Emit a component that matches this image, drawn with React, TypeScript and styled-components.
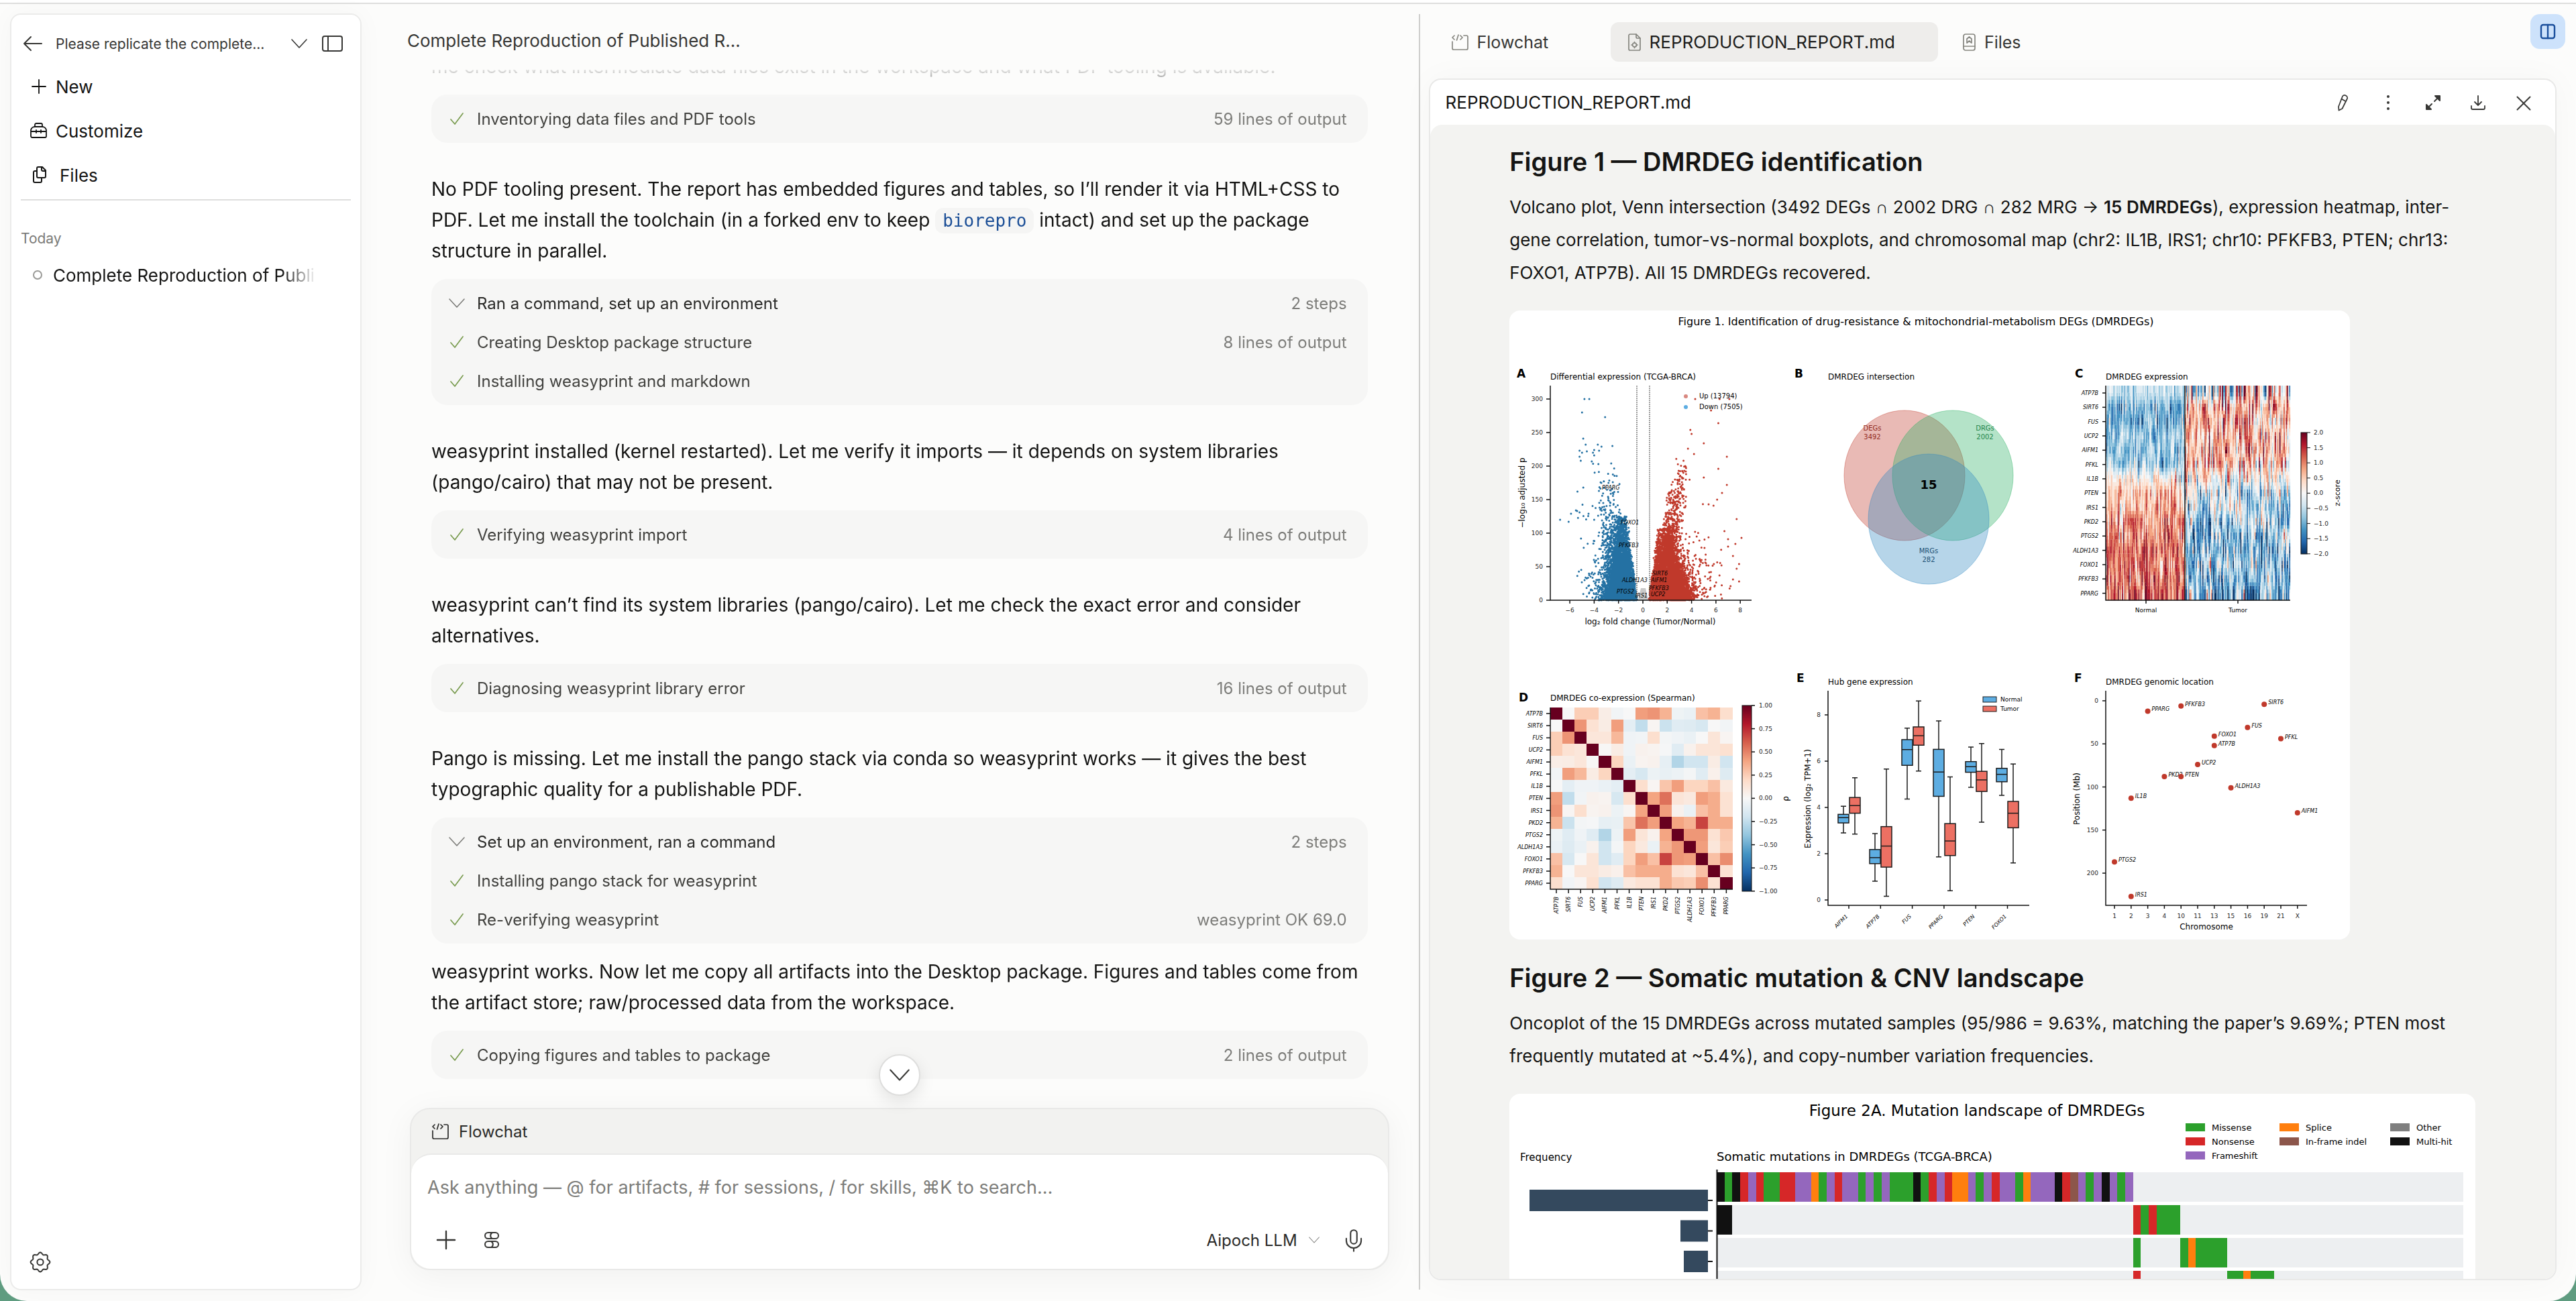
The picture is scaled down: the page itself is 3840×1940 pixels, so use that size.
import { Mic, X } from 'lucide-react';
import React from 'react';
import styled, { createGlobalStyle } from 'styled-components';

const GlobalStyle = createGlobalStyle`
    * {
        box-sizing: border-box;
    }

    body {
        margin: 0;
        background: #5f9c80;
        color: #141413;
        font-family: Inter, 'Liberation Sans', sans-serif;
        font-size: 26px;
    }

    button, select, textarea {
        margin: 0;
        padding: 0;
        border: 0;
        background: none;
        color: inherit;
        font: inherit;
    }

    button {
        cursor: pointer;
    }

    svg {
        display: block;
        flex: none;
    }
`;

/* ---------- window ---------- */

const Window = styled.div`
    display: flex;
    flex-direction: column;
    height: 100vh;
    overflow: hidden;
    border-radius: 0 0 40px 40px;
    background: #fcfcfb;
`;

const TopStrip = styled.div`
    flex: none;
    height: 6px;
    border-bottom: 2px solid #dededd;
    background: #ffffff;
`;

const Columns = styled.div`
    display: flex;
    flex: 1;
    min-height: 0;
`;

/* ---------- sidebar ---------- */

const SidebarPanel = styled.aside`
    display: flex;
    flex-direction: column;
    flex: 0 0 524px;
    min-width: 0;
    margin: 14px 0 16px 15px;
    padding: 20px 14px 22px;
    border: 2px solid #ebebea;
    border-radius: 16px;
    background: #ffffff;
    box-shadow: 0 0 40px rgba(0, 0, 0, 0.03);
`;

const SidebarHeader = styled.div`
    display: flex;
    align-items: center;
    height: 46px;
    margin-bottom: 8px;
    padding-right: 9px;
    color: #373735;
`;

const IconButton = styled.button`
    display: grid;
    place-items: center;
    width: 36px;
    height: 36px;
    color: #373735;
`;

const ProjectButton = styled.button`
    display: flex;
    flex: 1;
    align-items: center;
    justify-content: space-between;
    margin: 0 20px 0 16px;
    font-size: 21px;
`;

const NavLink = styled.a`
    display: flex;
    align-items: center;
    gap: 12px;
    height: 66px;
    padding-left: 14px;
    color: inherit;
    text-decoration: none;
`;

const NavDivider = styled.hr`
    width: 100%;
    height: 2px;
    margin: 3px 0 42px;
    border: 0;
    background: #dededd;
`;

const GroupTitle = styled.h2`
    margin: 0;
    color: #7b7b78;
    font-size: 21px;
    font-weight: 400;
    line-height: 30px;
`;

const SessionLink = styled.a`
    display: flex;
    align-items: center;
    gap: 16px;
    height: 48px;
    margin: 15px 56px 0 0;
    padding-left: 18px;
    color: inherit;
    text-decoration: none;
`;

const SessionDot = styled.span`
    flex: none;
    width: 14px;
    height: 14px;
    border: 2px solid #9a9a97;
    border-radius: 50%;
`;

const SessionName = styled.span`
    overflow: hidden;
    white-space: nowrap;
    mask-image: linear-gradient(to right, #000 88%, rgba(0, 0, 0, 0.1));
`;

const SidebarFooter = styled.div`
    margin-top: auto;
    padding-left: 11px;
`;

/* ---------- chat ---------- */

const ChatColumn = styled.main`
    display: flex;
    flex: 19 1 0;
    flex-direction: column;
    min-width: 0;
    padding: 0 0 46px 28px;
`;

const ChatTitle = styled.h1`
    flex: none;
    height: 98px;
    margin: 0;
    padding: 36px 40px 0;
    color: #373735;
    font-size: 26px;
    font-weight: 400;
    line-height: 38px;
`;

const Thread = styled.div`
    display: flex;
    flex: 1;
    flex-direction: column;
    justify-content: flex-end;
    gap: 19px;
    min-height: 0;
    margin-bottom: 43px;
    padding: 0 76px;
    overflow: hidden;
    mask-image: linear-gradient(to bottom, rgba(0, 0, 0, 0.1), #000 44px);
`;

const Message = styled.p<{ $spaced?: boolean }>`
    flex: none;
    margin: ${props => (props.$spaced ? '27px' : '0')} 0 0;
    font-size: 28px;
    line-height: 46px;
`;

const InlineCode = styled.code`
    padding: 4px 11px;
    border-radius: 12px;
    background: #f5f5f4;
    color: #1c4f97;
    font-family: 'DejaVu Sans Mono', monospace;
    font-size: 26px;
    line-height: 32px;
`;

const StepCard = styled.section`
    flex: none;
    padding: 7px 31px 7px 26px;
    border-radius: 24px;
    background: #f6f6f5;
`;

const StepRow = styled.button<{ $heading?: boolean }>`
    display: flex;
    align-items: center;
    gap: 18px;
    width: 100%;
    height: 58px;
    color: ${props => (props.$heading ? '#2a2a28' : '#42423f')};
    font-size: 24px;
    text-align: left;
`;

const StepMeta = styled.span`
    margin-left: auto;
    color: #7d7d7a;
`;

const Composer = styled.form`
    position: relative;
    flex: none;
    margin: 0 44px;
    border: 2px solid #e9e9e8;
    border-radius: 30px;
    background: #f2f2f0;
    box-shadow: 0 8px 50px rgba(0, 0, 0, 0.05);
`;

const ScrollButton = styled.button`
    position: absolute;
    bottom: calc(100% + 20px);
    left: 50%;
    display: grid;
    place-items: center;
    width: 62px;
    height: 62px;
    margin-left: -31px;
    border: 2px solid #dededd;
    border-radius: 50%;
    background: #ffffff;
    box-shadow: 0 8px 24px rgba(0, 0, 0, 0.1);
    color: #373735;
`;

const ComposerContext = styled.div`
    display: flex;
    align-items: center;
    gap: 14px;
    height: 66px;
    padding-left: 31px;
    color: #2a2a28;
    font-size: 24px;
`;

const ComposerBox = styled.div`
    padding: 31px 34px 23px 24px;
    border-top: 2px solid #e9e9e8;
    border-radius: 30px;
    background: #ffffff;
`;

const ComposerInput = styled.textarea`
    display: block;
    width: 100%;
    height: 36px;
    overflow: hidden;
    outline: 0;
    resize: none;
    font-size: 27px;
    line-height: 36px;

    &::placeholder {
        color: #7d7d7a;
        opacity: 1;
    }
`;

const ComposerTools = styled.div`
    display: flex;
    align-items: center;
    gap: 32px;
    height: 40px;
    margin-top: 40px;
    padding-left: 10px;
`;

const ModelPicker = styled.label`
    display: flex;
    align-items: center;
    gap: 16px;
    margin-left: auto;
    color: #7d7d7a;

    select {
        appearance: none;
        color: #2a2a28;
        font-size: 24px;
    }
`;

/* ---------- document viewer ---------- */

const ViewerColumn = styled.section`
    display: flex;
    flex: 21 1 0;
    flex-direction: column;
    min-width: 0;
    margin: 15px 0 17px;
    padding: 0 0 14px 13px;
    border-left: 2px solid #cfcfcd;
`;

const TabBar = styled.div`
    display: flex;
    align-items: flex-start;
    justify-content: space-between;
    height: 96px;
    padding: 0 16px 0 8px;
`;

const Tabs = styled.nav`
    display: flex;
    gap: 11px;
    margin-top: 12px;
`;

const Tab = styled.button<{ $active?: boolean }>`
    display: flex;
    align-items: center;
    gap: 12px;
    min-width: 252px;
    height: 59px;
    padding: 0 64px 0 26px;
    border-radius: 12px;
    background: ${props => (props.$active ? '#eeedeb' : 'none')};
    color: ${props => (props.$active ? '#1d1d1c' : '#373735')};
    font-size: ${props => (props.$active ? '26px' : '25px')};

    svg {
        color: #85857f;
    }
`;

const SplitButton = styled.button`
    display: grid;
    place-items: center;
    width: 52px;
    height: 52px;
    border-radius: 14px;
    background: #cde2fb;
    color: #1b4f9c;
`;

const Viewer = styled.article`
    display: flex;
    flex: 1;
    flex-direction: column;
    min-height: 0;
    margin-right: 29px;
    overflow: hidden;
    border: 2px solid #e9e9e8;
    border-radius: 18px;
    background: #ffffff;
    box-shadow: 0 0 50px rgba(0, 0, 0, 0.03);
`;

const ViewerHeader = styled.header`
    display: flex;
    flex: none;
    align-items: center;
    justify-content: space-between;
    height: 67px;
    padding: 0 30px 0 23px;
`;

const ViewerActions = styled.div`
    display: flex;
    gap: 31px;
`;

const DocumentBody = styled.div`
    flex: 1;
    min-height: 0;
    overflow: hidden;
    padding: 31px 60px 0;
    border-radius: 18px 18px 0 0;
    background: #f3f3f1;
`;

const DocumentContent = styled.div`
    max-width: 1440px;
    margin: 0 auto;
`;

const SectionTitle = styled.h2`
    margin: 0 0 19px;
    font-size: 38px;
    font-weight: 600;
    line-height: 48px;
`;

const Paragraph = styled.p`
    margin: 0 0 32px;
    font-size: 26px;
    line-height: 49px;

    strong {
        font-weight: 600;
    }
`;

const Figure = styled.figure<{ $width: number }>`
    max-width: ${props => props.$width}px;
    margin: 0 0 33px;
    overflow: hidden;
    border-radius: 16px;
    background: #ffffff;

    svg {
        width: 100%;
        height: auto;
        font-family: 'DejaVu Sans', sans-serif;
    }
`;

/* ---------- icons ---------- */

const iconProps = {
    fill: 'none',
    stroke: 'currentColor',
    strokeLinecap: 'round' as const,
    strokeLinejoin: 'round' as const,
    'aria-hidden': true,
};

const ChevronIcon: React.FC<{ width?: number; color?: string }> = ({ width = 24, color }) => (
    <svg width={width} height={width} viewBox="0 0 24 24" strokeWidth="1.6" {...iconProps} color={color}>
        <path d="m1 6 11 12L23 6" />
    </svg>
);

const CheckIcon = () => (
    <svg width="24" height="24" viewBox="0 0 24 24" strokeWidth="1.7" {...iconProps} color="#7a9c50">
        <path d="m3 13 6 7L21 4" />
    </svg>
);

const BackIcon = () => (
    <svg width="36" height="26" viewBox="0 0 36 26" strokeWidth="2" {...iconProps}>
        <path d="M31 13H5M15 3 5 13l10 10" />
    </svg>
);

const PlusIcon: React.FC<{ size?: number }> = ({ size = 26 }) => (
    <svg width={size} height={size} viewBox="0 0 26 26" strokeWidth="1.8" {...iconProps}>
        <path d="M13 3v20M3 13h20" />
    </svg>
);

const PanelIcon = () => (
    <svg width="32" height="26" viewBox="0 0 32 26" strokeWidth="2" {...iconProps}>
        <rect x="1" y="2" width="29" height="22" rx="3" />
        <path d="M9 2v22" />
    </svg>
);

const ToolboxIcon = () => (
    <svg width="26" height="26" viewBox="0 0 26 26" strokeWidth="1.8" {...iconProps}>
        <path d="M7 7V4a2 2 0 0 1 2-2h7a2 2 0 0 1 2 2v3" />
        <path d="M1 14v-2a6 6 0 0 1 6-5h11a6 6 0 0 1 6 5v9a2 2 0 0 1-2 2H3a2 2 0 0 1-2-2zh23M9 12v4M16 12v4" />
    </svg>
);

const FilesIcon = () => (
    <svg width="32" height="26" viewBox="0 0 32 26" strokeWidth="2" {...iconProps}>
        <path d="M12 1h6l5 5v9a2 2 0 0 1-2 2h-9a2 2 0 0 1-2-2V3a2 2 0 0 1 2-2z" />
        <path d="M17 1v4a2 2 0 0 0 2 2h4M10 7H7a2 2 0 0 0-2 2v13a2 2 0 0 0 2 2h8a2 2 0 0 0 2-2v-4" />
    </svg>
);

const gearOutline = Array.from({ length: 97 }, (_, i) => {
    const angle = (i / 96) * Math.PI * 2;
    const radius = 13 + 1.4 * Math.cos(angle * 8);
    return `${(16 + radius * Math.sin(angle)).toFixed(1)} ${(16 - radius * Math.cos(angle)).toFixed(1)}`;
}).join('L');

const GearIcon = () => (
    <svg width="32" height="32" viewBox="0 0 32 32" strokeWidth="2" {...iconProps}>
        <path d={`M${gearOutline}Z`} />
        <circle cx="16" cy="16" r="4.6" />
    </svg>
);

const FlowIcon = () => (
    <svg width="26" height="26" viewBox="0 0 26 26" strokeWidth="1.7" {...iconProps}>
        <path d="M1 12v10a2 2 0 0 0 2 2h19a2 2 0 0 0 2-2V5a2 2 0 0 0-2-2h-4" />
        <path d="M4 3 1 6l3 3M10 2 7.500 10M13 3l3 3-3 3" />
    </svg>
);

const ReportIcon = () => (
    <svg width="20" height="26" viewBox="0 0 20 26" strokeWidth="1.700" {...iconProps}>
        <path d="M3 1h9l6 6v16a2 2 0 0 1-2 2H3a2 2 0 0 1-2-2V3a2 2 0 0 1 2-2z" />
        <path d="M12 1v4a2 2 0 0 0 2 2h4" />
        <circle cx="9.500" cy="17" r="3" />
        <path d="M9.500 12.500V14M9.500 20v1.500M5 17h1.500M12.500 17H14" />
    </svg>
);

const BookIcon = () => (
    <svg width="20" height="26" viewBox="0 0 20 26" strokeWidth="1.700" {...iconProps}>
        <rect x="1" y="1" width="17" height="24" rx="3" />
        <path d="M1 19h17M6 14V8l3.500-3L13 8v6l-3.500-3z" />
    </svg>
);

const SplitIcon = () => (
    <svg width="24" height="24" viewBox="0 0 24 24" strokeWidth="2.400" {...iconProps}>
        <rect x="2" y="2" width="20" height="20" rx="3" />
        <path d="M12 2v20" />
    </svg>
);

const PencilIcon = () => (
    <svg width="24" height="26" viewBox="0 0 24 26" strokeWidth="1.700" {...iconProps}>
        <path d="M11 3.500a4 4 0 0 1 7 3.500L10.500 22 5.500 24.500 5 19z" />
        <path d="m9.500 7.500 6 3.500" />
    </svg>
);

const DotsIcon = () => (
    <svg width="24" height="24" viewBox="0 0 24 24" fill="currentColor" aria-hidden>
        <circle cx="12" cy="3" r="2" />
        <circle cx="12" cy="12" r="2" />
        <circle cx="12" cy="21" r="2" />
    </svg>
);

const ExpandIcon = () => (
    <svg width="26" height="26" viewBox="0 0 26 26" strokeWidth="2" {...iconProps}>
        <path d="m15 11 7-7M4 22l7-7" />
        <path d="M16 3h7v7zM3 16v7h7z" fill="currentColor" />
    </svg>
);

const SaveIcon = () => (
    <svg width="24" height="24" viewBox="0 0 24 24" strokeWidth="1.800" {...iconProps}>
        <path d="M12 2v14M7 11l5 5 5-5M2 17v3a2 2 0 0 0 2 2h16a2 2 0 0 0 2-2v-3" />
    </svg>
);

const SkillsIcon = () => (
    <svg width="24" height="26" viewBox="0 0 24 26" strokeWidth="2" {...iconProps}>
        <rect x="2" y="2" width="20" height="9" rx="4.500" />
        <rect x="2" y="15" width="20" height="9" rx="4.500" />
        <path d="M13 2a5 5 0 0 0 0 9M11 15a5 5 0 0 1 0 9" />
    </svg>
);

/* ---------- figure helpers ---------- */

const genes = [
    'ATP7B', 'SIRT6', 'FUS', 'UCP2', 'AIFM1', 'PFKL', 'IL1B', 'PTEN',
    'IRS1', 'PKD2', 'PTGS2', 'ALDH1A3', 'FOXO1', 'PFKFB3', 'PPARG',
];

const rdBu = [
    [5, 48, 97], [33, 102, 172], [67, 147, 195], [146, 197, 222], [209, 229, 240], [247, 247, 247],
    [253, 219, 199], [244, 165, 130], [214, 96, 77], [178, 24, 43], [103, 0, 31],
];

// diverging colour for a value between -1 and 1
const diverging = (value: number) => {
    const t = (Math.max(-1, Math.min(1, value)) + 1) * 5;
    const i = Math.min(9, Math.floor(t));
    const mix = rdBu[i].map((c, k) => Math.round(c + (rdBu[i + 1][k] - c) * (t - i)));
    return `rgb(${mix.join(',')})`;
};

const createRandom = (seed: number) => () => {
    seed = (seed * 1664525 + 1013904223) % 4294967296;
    return seed / 4294967296;
};

const createNormal = (random: () => number) => () =>
    Math.sqrt(-2 * Math.log(random() + 1e-9)) * Math.cos(2 * Math.PI * random());

const createExponential = (random: () => number) => (mean: number) => -Math.log(random() + 1e-6) * mean;

type Point = [number, number];

const toDots = (points: Point[]) => points.map(([x, y]) => `M${x.toFixed(1)} ${y.toFixed(1)}h0`).join('');

const Gradient: React.FC<{ id: string }> = ({ id }) => (
    <linearGradient id={id} x1="0" y1="1" x2="0" y2="0">
        {rdBu.map((c, i) => (
            <stop key={i} offset={i / 10} stopColor={`rgb(${c.join(',')})`} />
        ))}
    </linearGradient>
);

const PanelTitle: React.FC<{ letter: string; letterX: number; letterY: number; x: number; y: number; title: string }> = ({
    letter, letterX, letterY, x, y, title,
}) => (
    <>
        <text x={letterX} y={letterY} fontSize="17" fontWeight="700">{letter}</text>
        <text x={x} y={y} fontSize="12">{title}</text>
    </>
);

/* ---------- figure 1 ---------- */

const foldX = (v: number) => 199 + 18.15 * v;
const pvalueY = (v: number) => 432 - v;

const makeCloud = (side: -1 | 1, seed: number) => {
    const random = createRandom(seed);
    const exponential = createExponential(random);
    const up = side === 1;
    const points: Point[] = [];
    const push = (fold: number, p: number, limit: number) => {
        if (p > 0 && p < limit && fold < (up ? 7.9 : 5.4)) points.push([foldX(side * fold), pvalueY(p)]);
    };
    for (let i = 0; i < 5200; i++) {
        const p = exponential(up ? 29 : 36);
        const width = (up ? 3 : 2.3) * Math.max(0.25, 1 - p / 150);
        push(0.45 + p * 0.0065 + random() * width + exponential(up ? 0.3 : 0.25), p, up ? 108 : 125);
    }
    // column of strongly changed genes above the base
    for (let i = 0; i < (up ? 480 : 260); i++) {
        const p = 60 + random() * (up ? Math.sqrt(random()) : random()) * 155;
        const centre = up ? 1.2 + p * 0.0105 : 1.6 + p * 0.009;
        push(centre + (random() + random() - 1) * (up ? 0.9 : 1.3), p, up ? 215 : 205);
    }
    for (let i = 0; i < (up ? 720 : 480); i++) {
        push(1.9 + exponential(up ? 1.1 : 1), exponential(up ? 38 : 60), up ? 165 : 205);
    }
    return points;
};

const place = ([fold, p]: number[]): Point => [foldX(fold), pvalueY(p)];

const downPoints = makeCloud(-1, 7).concat(
    [
        [-4.8, 300], [-4.4, 300], [-5, 280], [-3.1, 273], [-4.9, 241], [-4.7, 232], [-3.7, 232], [-2.5, 230], [-3.4, 229],
        [-5.2, 223], [-4.6, 222], [-4, 224], [-3.6, 223], [-4.1, 220], [-5, 220], [-4, 216], [-5.2, 214], [-5.1, 208],
        [-4.2, 207], [-2.6, 204], [-6.8, 120], [-6.1, 117], [-5.9, 129], [-5.5, 134], [-5.4, 133], [-5.2, 131],
    ].map(place),
);

const upPoints = makeCloud(1, 23).concat(
    [
        [4.3, 300], [6.3, 300], [7.1, 300], [5.6, 283], [6.2, 264], [3.9, 254], [4, 248], [5, 234], [3.7, 226], [4.2, 218],
        [6.9, 214], [6.2, 196], [5, 183], [6.9, 172], [6.5, 160], [6.1, 150], [5.4, 143], [5.8, 141], [7.7, 121], [6.7, 103],
        [8.1, 93], [7, 91], [7.6, 84], [7, 80], [7.4, 66], [7.9, 54], [7.7, 47], [7.4, 31], [7.9, 28], [7.2, 21],
    ].map(place),
);

const volcanoLabels: [number, number, string][] = [
    [138, 267, 'PPARG'], [166, 319, 'FOXO1'], [163, 353, 'PFKFB3'], [168, 405, 'ALDH1A3'],
    [213, 395, 'SIRT6'], [211, 405, 'AIFM1'], [160, 422, 'PTGS2'], [188, 428, 'IRS1'], [208, 417, 'PFKFB3'], [211, 426, 'UCP2'],
];

const axisText = { fontSize: 9, fill: '#262626' };

const Volcano = () => (
    <g>
        <PanelTitle letter="A" letterX={11} letterY={100} x={61} y={103} title="Differential expression (TCGA-BRCA)" />
        <path d="M192 432l4-18h7l4 18z" fill="#c9c9c9" />
        <path d={toDots(downPoints)} stroke="#2471a3" strokeWidth="3" strokeLinecap="round" />
        <path d={toDots(upPoints)} stroke="#c0392b" strokeWidth="3" strokeLinecap="round" />
        <path d="M190 112V432M209 112V432" stroke="#444" strokeDasharray="2 1" />
        <path d="M61 112V432H361" fill="none" stroke="#111" strokeWidth="1.500" />
        {[-6, -4, -2, 0, 2, 4, 6, 8].map(v => (
            <g key={v}>
                <path d={`M${foldX(v)} 432v5`} stroke="#111" strokeWidth="1.500" />
                <text x={foldX(v)} y="450" textAnchor="middle" {...axisText}>{String(v).replace('-', '−')}</text>
            </g>
        ))}
        {[0, 50, 100, 150, 200, 250, 300].map(v => (
            <g key={v}>
                <path d={`M61 ${pvalueY(v)}h-6`} stroke="#111" strokeWidth="1.500" />
                <text x="50" y={pvalueY(v) + 3} textAnchor="end" {...axisText}>{v}</text>
            </g>
        ))}
        {volcanoLabels.map(([x, y, label], i) => (
            <text key={i} x={x} y={y} fontSize="8" fontStyle="italic">{label}</text>
        ))}
        <circle cx="263" cy="128" r="3" fill="#d98880" />
        <circle cx="263" cy="144" r="3" fill="#5dade2" />
        <text x="283" y="131" fontSize="10">Up (13794)</text>
        <text x="283" y="147" fontSize="10">Down (7505)</text>
        <text x="210" y="468" fontSize="12" textAnchor="middle">log₂ fold change (Tumor/Normal)</text>
        <text transform="translate(23 272) rotate(-90)" fontSize="12" textAnchor="middle">−log₁₀ adjusted p</text>
    </g>
);

const Venn = () => (
    <g textAnchor="middle" fontSize="10">
        <g textAnchor="start">
            <PanelTitle letter="B" letterX={425} letterY={100} x={475} y={103} title="DMRDEG intersection" />
        </g>
        <g fillOpacity="0.35" strokeOpacity="0.4">
            <ellipse cx="589" cy="246" rx="90" ry="97" fill="#c0392b" stroke="#c0392b" />
            <ellipse cx="661" cy="246" rx="90" ry="97" fill="#27ae60" stroke="#27ae60" />
            <ellipse cx="625" cy="311" rx="90" ry="97" fill="#2e86c1" stroke="#2e86c1" />
        </g>
        <text x="541" y="179" fill="#922b21">DEGs</text>
        <text x="541" y="192" fill="#922b21">3492</text>
        <text x="709" y="179" fill="#1e8449">DRGs</text>
        <text x="709" y="192" fill="#1e8449">2002</text>
        <text x="625" y="362" fill="#1b4f72">MRGs</text>
        <text x="625" y="375" fill="#1b4f72">282</text>
        <text x="625" y="266" fontSize="18" fontWeight="700">15</text>
    </g>
);

const normalMeans = [-0.45, -1, -0.9, -0.7, -0.75, -0.8, 0.1, 0.7, 0.65, 0.9, 0.85, 0.95, 1, 1, 1.15];
const tumorMeans = [0.3, 0.6, 0.6, 0.5, 0.65, 0.5, 0, -0.45, -0.5, -0.65, -0.75, -0.75, -0.7, -0.65, -0.8];

// cells of equal colour are collected in one path
const expressionPaths = (() => {
    const normal = createNormal(createRandom(41));
    const columns = 170;
    const width = 275 / columns;
    const scores = normalMeans.map((mean, row) =>
        Array.from({ length: columns }, (_, c) => {
            if (c < 73) return mean + normal() * (row === 0 ? 0.3 : 0.55);
            return tumorMeans[row] + normal() * (row === 0 ? 1.2 : 0.8);
        }),
    );
    const buckets = new Map<number, string>();
    // each row is drawn as four strips blended with its neighbours
    for (let strip = 0; strip < 60; strip++) {
        const at = Math.max(0, Math.min(14, (strip + 0.5) / 4 - 0.5));
        const row = Math.min(13, Math.floor(at));
        for (let c = 0; c < columns; c++) {
            const z = scores[row][c] + (scores[row + 1][c] - scores[row][c]) * (at - row);
            const key = Math.max(-10, Math.min(10, Math.round(z * 5)));
            const x = (889 + c * width).toFixed(2);
            const y = (112 + (strip * 320) / 60).toFixed(2);
            buckets.set(key, `${buckets.get(key) ?? ''}M${x} ${y}h1.7v5.5h-1.7z`);
        }
    }
    return [...buckets];
})();

const Expression = () => (
    <g>
        <PanelTitle letter="C" letterX={843} letterY={100} x={889} y={103} title="DMRDEG expression" />
        {expressionPaths.map(([key, d]) => (
            <path key={key} d={d} fill={diverging(key / 10)} />
        ))}
        <path d="M1007 112V432" stroke="#111" strokeWidth="1.500" />
        <path d="M889 112V432H1164M949 432v5M1086 432v5" fill="none" stroke="#111" strokeWidth="1.500" />
        {genes.map((gene, i) => (
            <g key={gene}>
                <path d={`M889 ${123 + i * 21.33}h-5`} stroke="#111" strokeWidth="1.500" />
                <text x="878" y={126 + i * 21.33} fontSize="8" fontStyle="italic" textAnchor="end">{gene}</text>
            </g>
        ))}
        <text x="949" y="450" fontSize="9" textAnchor="middle">Normal</text>
        <text x="1086" y="450" fontSize="9" textAnchor="middle">Tumor</text>
        <rect x="1180" y="182" width="9" height="181" fill="url(#zscore)" stroke="#111" />
        {['2.0', '1.5', '1.0', '0.5', '0.0', '−0.5', '−1.0', '−1.5', '−2.0'].map((label, i) => (
            <g key={label}>
                <path d={`M1189 ${182 + i * 22.6}h5`} stroke="#111" />
                <text x="1199" y={185 + i * 22.6} {...axisText}>{label}</text>
            </g>
        ))}
        <text transform="translate(1238 272) rotate(-90)" fontSize="11" textAnchor="middle">z-score</text>
    </g>
);

// upper triangle of the Spearman matrix, row by row
const correlations = [
    [1, 0, 0.25, 0.25, 0.07, -0.03, 0, 0.42, 0.45, 0.35, -0.05, -0.07, 0.3, 0.35, 0.17],
    [1, 0.45, 0.15, 0.08, 0.42, -0.1, -0.25, 0.02, -0.22, -0.12, -0.13, -0.17, 0, -0.03],
    [1, 0.12, 0.12, 0.33, -0.04, -0.03, 0.17, -0.02, -0.04, -0.07, 0, 0.13, 0.02],
    [1, 0.01, 0.08, -0.04, 0.04, 0.03, -0.01, -0.12, 0.04, 0.13, 0.13, 0.16],
    [1, 0.22, -0.07, 0.03, 0.04, -0.09, -0.3, -0.2, -0.2, 0.08, -0.2],
    [1, -0.1, -0.17, -0.06, -0.08, -0.06, -0.02, -0.12, 0.05, -0.13],
    [1, 0.17, 0.02, 0.28, 0.42, 0.22, 0.22, 0.3, 0.1],
    [1, 0.4, 0.55, 0.13, 0.1, 0.42, 0.37, 0.15],
    [1, 0.42, 0.04, -0.07, 0.3, 0.37, 0.15],
    [1, 0.4, 0.35, 0.68, 0.37, 0.37],
    [1, 0.44, 0.44, 0.15, 0.27],
    [1, 0.42, 0.12, 0.25],
    [1, 0.3, 0.47],
    [1, 0.15],
    [1],
];

const Coexpression = () => (
    <g>
        <PanelTitle letter="D" letterX={14} letterY={583} x={61} y={582} title="DMRDEG co-expression (Spearman)" />
        <g shapeRendering="crispEdges">
            {genes.map((gene, row) =>
                genes.map((other, column) => (
                    <rect
                        key={gene + other}
                        x={61 + column * 18.1}
                        y={592 + row * 18.07}
                        width="18.2"
                        height="18.2"
                        fill={diverging(correlations[Math.min(row, column)][Math.abs(row - column)])}
                    />
                )),
            )}
        </g>
        <path d="M61 592V863H333" fill="none" stroke="#111" strokeWidth="1.500" />
        {genes.map((gene, i) => (
            <g key={gene} fontSize="8" fontStyle="italic" textAnchor="end">
                <path d={`M61 ${601 + i * 18.07}h-6M${70 + i * 18.1} 863v6`} stroke="#111" strokeWidth="1.500" />
                <text x="50" y={604 + i * 18.07}>{gene}</text>
                <text transform={`translate(${73 + i * 18.1} 874) rotate(-90)`}>{gene}</text>
            </g>
        ))}
        <rect x="347" y="589" width="14" height="277" fill="url(#zscore)" stroke="#111" />
        {['1.00', '0.75', '0.50', '0.25', '0.00', '−0.25', '−0.50', '−0.75', '−1.00'].map((label, i) => (
            <g key={label}>
                <path d={`M361 ${589 + i * 34.6}h5`} stroke="#111" strokeWidth="1.500" />
                <text x="372" y={592 + i * 34.6} {...axisText}>{label}</text>
            </g>
        ))}
        <text transform="translate(416 728) rotate(-90)" fontSize="12" textAnchor="middle">ρ</text>
    </g>
);

const exprY = (v: number) => 879 - 34.5 * v;

// x, then low whisker, quartiles and high whisker in log2 TPM
const boxes: [number, number, number, number, number, number][] = [
    [498, 2.9, 3.33, 3.56, 3.7, 4.05], [515, 2.85, 3.75, 4.08, 4.43, 5.28],
    [545, 0.81, 1.57, 1.83, 2.18, 2.87], [562, 0.16, 1.42, 2.33, 3.17, 5.66],
    [593, 4.36, 5.82, 6.5, 6.93, 7.43], [610, 5.57, 6.69, 7.1, 7.48, 8.6],
    [640, 1.86, 4.48, 5.53, 6.51, 7.74], [657, 0.4, 1.92, 2.55, 3.3, 5.32],
    [688, 4.87, 5.52, 5.76, 5.98, 6.61], [704, 3.36, 4.69, 5.19, 5.56, 6.76],
    [734, 4.52, 5.11, 5.43, 5.69, 6.51], [751, 1.6, 3.12, 3.75, 4.26, 5.88],
];

const HubGenes = () => (
    <g>
        <PanelTitle letter="E" letterX={428} letterY={554} x={475} y={558} title="Hub gene expression" />
        <path d="M475 567V887H775" fill="none" stroke="#111" strokeWidth="1.500" />
        {[0, 2, 4, 6, 8].map(v => (
            <g key={v}>
                <path d={`M475 ${exprY(v)}h-5`} stroke="#111" strokeWidth="1.500" />
                <text x="464" y={exprY(v) + 3} textAnchor="end" {...axisText}>{v}</text>
            </g>
        ))}
        {['AIFM1', 'ATP7B', 'FUS', 'PPARG', 'PTEN', 'FOXO1'].map((gene, i) => (
            <g key={gene}>
                <path d={`M${506 + i * 47.3} 887v5`} stroke="#111" strokeWidth="1.500" />
                <text
                    transform={`translate(${505 + i * 47.3} 904) rotate(-45)`}
                    fontSize="8"
                    fontStyle="italic"
                    textAnchor="end"
                >
                    {gene}
                </text>
            </g>
        ))}
        {boxes.map(([x, low, q1, median, q3, high], i) => (
            <g key={x} stroke="#1c1c1c" strokeWidth="1.500">
                <path d={`M${x} ${exprY(low)}V${exprY(high)}M${x - 4} ${exprY(low)}h8M${x - 4} ${exprY(high)}h8`} />
                <rect
                    x={x - 8}
                    y={exprY(q3)}
                    width="16"
                    height={exprY(q1) - exprY(q3)}
                    fill={i % 2 ? '#ec7063' : '#5dade2'}
                />
                <path d={`M${x - 8} ${exprY(median)}h16`} />
            </g>
        ))}
        <rect x="706" y="576" width="20" height="8" fill="#5dade2" stroke="#1c1c1c" />
        <rect x="706" y="590" width="20" height="8" fill="#ec7063" stroke="#1c1c1c" />
        <text x="732" y="583" fontSize="9">Normal</text>
        <text x="732" y="597" fontSize="9">Tumor</text>
        <text transform="translate(449 728) rotate(-90)" fontSize="12" textAnchor="middle">Expression (log₂ TPM+1)</text>
    </g>
);

const chromosomes = ['1', '2', '3', '4', '10', '11', '13', '15', '16', '19', '21', 'X'];
const chromX = (i: number) => 902 + i * 24.8;
const megabaseY = (v: number) => 582 + v * 1.285;

const loci: [string, number, number][] = [
    ['PPARG', 2, 12], ['PFKFB3', 4, 6], ['SIRT6', 9, 4], ['FUS', 8, 31], ['FOXO1', 6, 41],
    ['ATP7B', 6, 52], ['PFKL', 10, 44], ['UCP2', 5, 74], ['PKD2', 3, 88], ['PTEN', 4, 88],
    ['ALDH1A3', 7, 101], ['IL1B', 1, 113], ['AIFM1', 11, 130], ['PTGS2', 0, 187], ['IRS1', 1, 227],
];

const Locations = () => (
    <g>
        <PanelTitle letter="F" letterX={842} letterY={554} x={889} y={558} title="DMRDEG genomic location" />
        <path d="M889 567V887H1189" fill="none" stroke="#111" strokeWidth="1.500" />
        {[0, 50, 100, 150, 200].map(v => (
            <g key={v}>
                <path d={`M889 ${megabaseY(v)}h-5`} stroke="#111" strokeWidth="1.500" />
                <text x="878" y={megabaseY(v) + 3} textAnchor="end" {...axisText}>{v}</text>
            </g>
        ))}
        {chromosomes.map((name, i) => (
            <g key={name}>
                <path d={`M${chromX(i)} 887v5`} stroke="#111" strokeWidth="1.500" />
                <text x={chromX(i)} y="906" textAnchor="middle" {...axisText}>{name}</text>
            </g>
        ))}
        {loci.map(([gene, chromosome, position]) => (
            <g key={gene}>
                <circle cx={chromX(chromosome)} cy={megabaseY(position)} r="4" fill="#c0392b" />
                <text x={chromX(chromosome) + 6} y={megabaseY(position)} fontSize="8" fontStyle="italic">{gene}</text>
            </g>
        ))}
        <text x="1039" y="923" fontSize="12" textAnchor="middle">Chromosome</text>
        <text transform="translate(850 728) rotate(-90)" fontSize="12" textAnchor="middle">Position (Mb)</text>
    </g>
);

const IdentificationFigure = () => (
    <svg viewBox="0 0 1253 938" role="img" aria-label="Identification of DMRDEGs">
        <defs>
            <Gradient id="zscore" />
        </defs>
        <text x="606" y="22" fontSize="16" textAnchor="middle">
            Figure 1. Identification of drug-resistance &amp; mitochondrial-metabolism DEGs (DMRDEGs)
        </text>
        <Volcano />
        <Venn />
        <Expression />
        <Coexpression />
        <HubGenes />
        <Locations />
    </svg>
);

/* ---------- figure 2 ---------- */

const mutationColors: Record<string, string> = {
    G: '#2ca02c',
    R: '#d62728',
    P: '#9467bd',
    O: '#ff7f0e',
    B: '#8c564b',
    K: '#111111',
};

// one letter per sample, dot for a sample without a mutation
const mutationRows = [
    'KGKRPRGGRRPPOGPRPPGPGPGGGKGRPROOPGPRPPGOPPPKRBPGPKPGP',
    `KK${'.'.repeat(51)}RGRGGG`,
    `${'.'.repeat(53)}G${'.'.repeat(5)}GOGGGG`,
    `${'.'.repeat(53)}R${'.'.repeat(11)}GGOGGG`,
];

const mutationLegend: [string, string, number, number][] = [
    ['Missense', '#2ca02c', 1008, 44],
    ['Nonsense', '#d62728', 1008, 65],
    ['Frameshift', '#9467bd', 1008, 86],
    ['Splice', '#ff7f0e', 1148, 44],
    ['In-frame indel', '#8c564b', 1148, 65],
    ['Other', '#7f7f7f', 1313, 44],
    ['Multi-hit', '#111111', 1313, 65],
];

const frequencies = [266, 41, 36];
const cellWidth = 11.71;

const MutationFigure = () => (
    <svg viewBox="0 0 1440 620" role="img" aria-label="Mutation landscape of DMRDEGs">
        <text x="697" y="33" fontSize="23" textAnchor="middle">Figure 2A. Mutation landscape of DMRDEGs</text>
        {mutationLegend.map(([label, color, x, y]) => (
            <g key={label}>
                <rect x={x} y={y} width="29" height="12" fill={color} />
                <text x={x + 39} y={y + 11} fontSize="13">{label}</text>
            </g>
        ))}
        <text x="16" y="100" fontSize="15">Frequency</text>
        <text x="309" y="100" fontSize="18">Somatic mutations in DMRDEGs (TCGA-BRCA)</text>
        <g shapeRendering="crispEdges">
            {mutationRows.map((cells, row) => (
                <g key={row}>
                    <rect x="309" y={117 + row * 49} width="1113" height="44" fill="#edeff1" />
                    {[...cells].map((cell, i) =>
                        cell === '.' ? null : (
                            <rect
                                key={i}
                                x={309 + i * cellWidth}
                                y={117 + row * 49}
                                width={cellWidth}
                                height="44"
                                fill={mutationColors[cell]}
                            />
                        ),
                    )}
                </g>
            ))}
        </g>
        {frequencies.map((width, row) => (
            <g key={width}>
                <rect x={296 - width} y={143 + row * 45.5} width={width} height="32" fill="#34495e" />
                <path d={`M296 ${159 + row * 45.5}h7`} stroke="#111" strokeWidth="2" />
            </g>
        ))}
        <path d="M309.500 113V620" stroke="#111" strokeWidth="2" />
    </svg>
);

/* ---------- page parts ---------- */

const Sidebar = () => (
    <SidebarPanel>
        <SidebarHeader>
            <IconButton type="button" aria-label="Back"><BackIcon /></IconButton>
            <ProjectButton type="button">
                Please replicate the complete...
                <ChevronIcon />
            </ProjectButton>
            <IconButton type="button" aria-label="Toggle sidebar"><PanelIcon /></IconButton>
        </SidebarHeader>
        <nav>
            <NavLink href="#new"><PlusIcon />New</NavLink>
            <NavLink href="#customize"><ToolboxIcon />Customize</NavLink>
            <NavLink href="#files"><FilesIcon />Files</NavLink>
        </nav>
        <NavDivider />
        <GroupTitle>Today</GroupTitle>
        <SessionLink href="#session">
            <SessionDot />
            <SessionName>Complete Reproduction of Published Results</SessionName>
        </SessionLink>
        <SidebarFooter>
            <IconButton type="button" aria-label="Settings"><GearIcon /></IconButton>
        </SidebarFooter>
    </SidebarPanel>
);

interface Step {
    label: string;
    meta?: string;
    heading?: boolean;
}

const Steps: React.FC<{ steps: Step[] }> = ({ steps }) => (
    <StepCard>
        {steps.map(({ label, meta, heading }) => (
            <StepRow key={label} type="button" $heading={heading}>
                {heading ? <ChevronIcon color="#7d7d7a" /> : <CheckIcon />}
                {label}
                {meta && <StepMeta>{meta}</StepMeta>}
            </StepRow>
        ))}
    </StepCard>
);

const Chat = () => (
    <ChatColumn>
        <ChatTitle>Complete Reproduction of Published R…</ChatTitle>
        <Thread>
            <Message>me check what intermediate data files exist in the workspace and what PDF tooling is available.</Message>
            <Steps steps={[{ label: 'Inventorying data files and PDF tools', meta: '59 lines of output' }]} />

            <Message $spaced>
                No PDF tooling present. The report has embedded figures and tables, so I’ll render it via HTML+CSS to
                PDF. Let me install the toolchain (in a forked env to keep <InlineCode>biorepro</InlineCode> intact) and
                set up the package structure in parallel.
            </Message>
            <Steps
                steps={[
                    { label: 'Ran a command, set up an environment', meta: '2 steps', heading: true },
                    { label: 'Creating Desktop package structure', meta: '8 lines of output' },
                    { label: 'Installing weasyprint and markdown' },
                ]}
            />

            <Message $spaced>
                weasyprint installed (kernel restarted). Let me verify it imports — it depends on system libraries
                (pango/cairo) that may not be present.
            </Message>
            <Steps steps={[{ label: 'Verifying weasyprint import', meta: '4 lines of output' }]} />

            <Message $spaced>
                weasyprint can’t find its system libraries (pango/cairo). Let me check the exact error and consider
                alternatives.
            </Message>
            <Steps steps={[{ label: 'Diagnosing weasyprint library error', meta: '16 lines of output' }]} />

            <Message $spaced>
                Pango is missing. Let me install the pango stack via conda so weasyprint works — it gives the best
                typographic quality for a publishable PDF.
            </Message>
            <Steps
                steps={[
                    { label: 'Set up an environment, ran a command', meta: '2 steps', heading: true },
                    { label: 'Installing pango stack for weasyprint' },
                    { label: 'Re-verifying weasyprint', meta: 'weasyprint OK 69.0' },
                ]}
            />

            <Message>
                weasyprint works. Now let me copy all artifacts into the Desktop package. Figures and tables come from
                the artifact store; raw/processed data from the workspace.
            </Message>
            <Steps steps={[{ label: 'Copying figures and tables to package', meta: '2 lines of output' }]} />
        </Thread>

        <Composer>
            <ScrollButton type="button" aria-label="Scroll to bottom"><ChevronIcon width={30} /></ScrollButton>
            <ComposerContext><FlowIcon />Flowchat</ComposerContext>
            <ComposerBox>
                <ComposerInput
                    rows={1}
                    aria-label="Message"
                    placeholder="Ask anything — @ for artifacts, # for sessions, / for skills, ⌘K to search…"
                />
                <ComposerTools>
                    <IconButton type="button" aria-label="Add"><PlusIcon size={34} /></IconButton>
                    <IconButton type="button" aria-label="Skills"><SkillsIcon /></IconButton>
                    <ModelPicker>
                        <select aria-label="Model">
                            <option>Aipoch LLM</option>
                        </select>
                        <ChevronIcon width={16} />
                    </ModelPicker>
                    <IconButton type="button" aria-label="Dictate"><Mic size={38} strokeWidth={1.3} /></IconButton>
                </ComposerTools>
            </ComposerBox>
        </Composer>
    </ChatColumn>
);

const Report = () => (
    <ViewerColumn>
        <TabBar>
            <Tabs>
                <Tab type="button"><FlowIcon />Flowchat</Tab>
                <Tab type="button" $active><ReportIcon />REPRODUCTION_REPORT.md</Tab>
                <Tab type="button"><BookIcon />Files</Tab>
            </Tabs>
            <SplitButton type="button" aria-label="Split view"><SplitIcon /></SplitButton>
        </TabBar>
        <Viewer>
            <ViewerHeader>
                REPRODUCTION_REPORT.md
                <ViewerActions>
                    <IconButton type="button" aria-label="Edit"><PencilIcon /></IconButton>
                    <IconButton type="button" aria-label="More"><DotsIcon /></IconButton>
                    <IconButton type="button" aria-label="Expand"><ExpandIcon /></IconButton>
                    <IconButton type="button" aria-label="Download"><SaveIcon /></IconButton>
                    <IconButton type="button" aria-label="Close"><X size={38} strokeWidth={1.2} /></IconButton>
                </ViewerActions>
            </ViewerHeader>
            <DocumentBody>
                <DocumentContent>
                    <SectionTitle>Figure 1 — DMRDEG identification</SectionTitle>
                    <Paragraph>
                        Volcano plot, Venn intersection (3492 DEGs ∩ 2002 DRG ∩ 282 MRG → <strong>15 DMRDEGs</strong>),
                        expression heatmap, inter-gene correlation, tumor-vs-normal boxplots, and chromosomal map (chr2:
                        IL1B, IRS1; chr10: PFKFB3, PTEN; chr13: FOXO1, ATP7B). All 15 DMRDEGs recovered.
                    </Paragraph>
                    <Figure $width={1253}><IdentificationFigure /></Figure>

                    <SectionTitle>Figure 2 — Somatic mutation &amp; CNV landscape</SectionTitle>
                    <Paragraph>
                        Oncoplot of the 15 DMRDEGs across mutated samples (95/986 = 9.63%, matching the paper’s 9.69%;
                        PTEN most frequently mutated at ~5.4%), and copy-number variation frequencies.
                    </Paragraph>
                    <Figure $width={1440}><MutationFigure /></Figure>
                </DocumentContent>
            </DocumentBody>
        </Viewer>
    </ViewerColumn>
);

const App: React.FC = () => (
    <>
        <GlobalStyle />
        <Window>
            <TopStrip />
            <Columns>
                <Sidebar />
                <Chat />
                <Report />
            </Columns>
        </Window>
    </>
);

export default App;
